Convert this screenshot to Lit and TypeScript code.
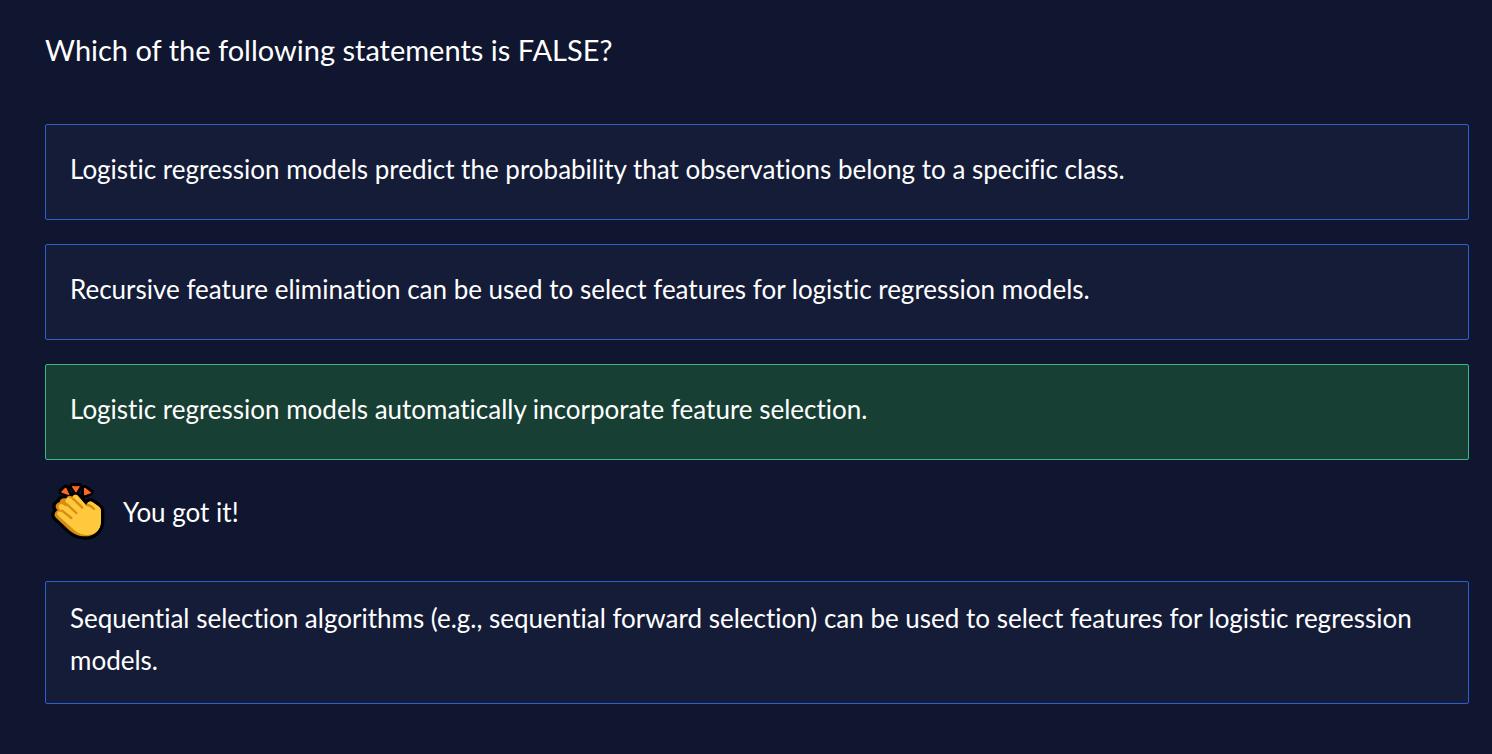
import { LitElement, html, css, svg } from "lit";
import { customElement, state } from "lit/decorators.js";
import { classMap } from "lit/directives/class-map.js";

interface Answer {
  text: string;
  correct?: boolean;
}

const ANSWERS: Answer[] = [
  { text: "Logistic regression models predict the probability that observations belong to a specific class." },
  { text: "Recursive feature elimination can be used to select features for logistic regression models." },
  { text: "Logistic regression models automatically incorporate feature selection.", correct: true },
  { text: "Sequential selection algorithms (e.g., sequential forward selection) can be used to select features for logistic regression models." },
];

const HANDS =
  "M45 124 C42 130 44 133 48 137 L86 173 C100 186 118 193 134 193 C164 193 183 174 183 146 L183 118 C183 111 180 107 175 103 L158 91 C151 86 142 90 141 98 L140 102 L116 74 C110 65 101 67 97 74 C90 68 80 71 79 80 C70 77 60 81 59 90 C51 92 46 98 47 105 C48 109 50 112 53 115 C49 117 46 120 45 124 Z";

const clap = svg`
  <g fill="#000" stroke="#000" stroke-width="20" stroke-linejoin="round">
    <path d=${HANDS} />
    <path d="M66 58 L78 48 L86 66 Z M98 43 L117 43 L108 60 Z M134 49 L151 61 L134 68 Z" />
  </g>
  <path fill="#d68d12" d=${HANDS} />
  <path fill="#ffc83d" d="M116 74 L140 102 L141 98 C142 90 151 86 158 91 L175 103 C180 107 183 111 183 118 L183 146 C183 174 164 189 140 189 C122 189 108 180 96 168 L55 131 C47 123 56 114 65 121 L60 112 C50 101 60 92 70 98 L79 104 L80 96 C74 88 76 79 83 77 C88 75 92 78 98 83 L97 77 C99 66 110 65 116 74 Z" />
  <g fill="none" stroke="#d68d12" stroke-width="7" stroke-linecap="round">
    <path d="M99 80 L127 107" />
    <path d="M80 96 L109 123" />
    <path d="M66 116 L94 138" />
    <path d="M142 99 C150 99 155 104 162 111" />
  </g>
  <g fill="#ff6723" stroke="#ff6723" stroke-width="4" stroke-linejoin="round">
    <path d="M77 49 L66 60 L86 67 Z" />
    <path d="M98 44 Q108 46 117 44 L108 59 Z" />
    <path d="M134 49 L151 62 L134 68 Z" />
  </g>
`;

@customElement("app-root")
export class AppRoot extends LitElement {
  static styles = css`
    :host {
      display: block;
      box-sizing: border-box;
      min-height: 100vh;
      padding: 29px 23px 50px 45px;
      background: #10162f;
      color: #fff;
      font-family: Lato, "Liberation Sans", sans-serif;
      font-variant-ligatures: none;
    }
    .question {
      margin: 0 0 53px;
      font-size: 29px;
      line-height: 42px;
      font-weight: 400;
    }
    .answers {
      display: flex;
      flex-direction: column;
      gap: 24px;
      margin: 0;
      padding: 0;
      list-style: none;
    }
    .answer {
      display: flex;
      align-items: center;
      box-sizing: border-box;
      width: 100%;
      min-height: 96px;
      padding: 15px 24px 22px;
      border: 1px solid #2e5fce;
      border-radius: 2px;
      background: #151c38;
      color: inherit;
      font: inherit;
      font-variant-ligatures: none;
      font-size: 26px;
      line-height: 42px;
      text-align: left;
      cursor: pointer;
    }
    .answer.correct {
      border-color: #3eb489;
      background: #183f33;
    }
    .feedback {
      display: flex;
      align-items: center;
      gap: 18px;
      margin: 0;
      padding: 23px 6px 17px;
      font-size: 26px;
      line-height: 42px;
    }
    .clap {
      display: block;
      width: 54px;
      height: 57px;
    }
  `;

  @state() private selected = 2;

  render() {
    return html`
      <main>
        <h1 class="question" id="question">Which of the following statements is FALSE?</h1>
        <ul class="answers" aria-labelledby="question">
          ${ANSWERS.map((answer, i) => {
            const solved = !!answer.correct && this.selected === i;
            return html`
              <li>
                <button
                  type="button"
                  class=${classMap({ answer: true, correct: solved })}
                  aria-pressed=${this.selected === i ? "true" : "false"}
                  @click=${() => (this.selected = i)}
                >
                  <span>${answer.text}</span>
                </button>
                ${solved
                  ? html`<p class="feedback" role="status">
                      <svg class="clap" viewBox="33 33 162 171" aria-hidden="true">${clap}</svg>
                      <span>You got it!</span>
                    </p>`
                  : null}
              </li>
            `;
          })}
        </ul>
      </main>
    `;
  }
}
